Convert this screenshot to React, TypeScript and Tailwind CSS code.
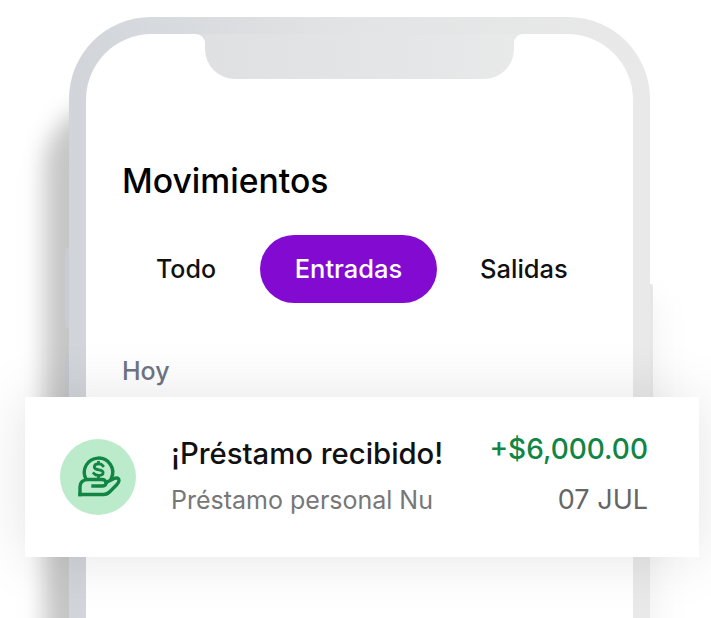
const fontClass = "font-['Inter','Liberation_Sans',sans-serif]";

const LoanIcon = () => (
  <svg viewBox="0 0 95 95" className="h-[95px] w-[95px] shrink-0" fill="none" stroke="#108544" strokeWidth="3.400" strokeLinejoin="round" strokeLinecap="square">
    <path d="M35 49A14.200 14.200 0 1 1 60.500 48" />
    <path d="M52 35.800c-1-1.300-2.500-1.900-4.400-1.900-2.600 0-4.300 1.200-4.300 3 0 4.100 8.800 1.800 8.800 5.500 0 1.900-1.900 3-4.500 3-2 0-3.700-.6-4.800-2" strokeWidth="2.800" />
    <path d="M47.500 32.500V33.500M47.500 46V47" strokeWidth="2.800" />
    <path d="M29 64.500V57c0-4.500 3-7.500 8-7.500H51c2.500 0 4.200 1.500 4.200 3.300S53.500 56 51 56H42" />
    <path d="M55.200 52.500l7.800-4c3-1.200 5-.3 5 2 0 1.700-1 3-2.500 4.500l-6.500 6.500c-1.800 2-3.800 3-6.500 3H29" />
  </svg>
);

export default function App() {
  return (
    <div className={`${fontClass} relative h-[618px] w-[711px] overflow-hidden bg-white`}>
      {/* shadow cast behind the phone */}
      <div className="absolute left-[44px] top-[100px] h-[600px] w-[100px] rounded-tl-[70px] bg-[#c6c6c6] blur-[11px]" />
      <div className="absolute left-[560px] top-[300px] h-[400px] w-[100px] bg-[#f4f4f4] blur-[14px]" />

      {/* side buttons */}
      <div className="absolute left-[65px] top-[248px] h-[80px] w-[5px] rounded-l-[2px] bg-[#c9cdd3]" />
      <div className="absolute left-[65px] top-[353px] h-[80px] w-[5px] rounded-l-[2px] bg-[#c2c6cc]" />
      <div className="absolute left-[648px] top-[284px] h-[130px] w-[5px] rounded-r-[2px] bg-[#e6e6e6]" />

      {/* phone */}
      <div className="relative ml-[69px] mt-[17px] h-[720px] w-[581px] rounded-t-[82px] bg-gradient-to-r from-[#d1d5da] via-[#e3e4e5] to-[#e9e9e9] p-[17px]">
        <div className="h-full overflow-hidden rounded-t-[66px] bg-white">
          {/* notch */}
          <div className="flex h-[45px] justify-center">
            <div className="h-[12px] w-[10px] bg-[#dcdee1]">
              <div className="h-full w-full rounded-tr-[9px] bg-white" />
            </div>
            <div className="w-[309px] rounded-b-[30px] bg-gradient-to-r from-[#dee0e2] to-[#e8e9e9]" />
            <div className="h-[12px] w-[10px] bg-[#e8e9e9]">
              <div className="h-full w-full rounded-tl-[9px] bg-white" />
            </div>
          </div>

          <div className="px-9 pt-[82px]">
            <h1 className="text-[33.700px] font-medium leading-[40px] text-black">Movimientos</h1>
            <div className="mt-[34px] flex items-center">
              <span className="ml-[34px] w-[60px] text-[25px] font-medium leading-[68px] text-[#111111]">Todo</span>
              <span className="ml-[44px] flex h-[68px] w-[177px] items-center justify-center rounded-[34px] bg-[#820ad1] text-[25.500px] font-medium text-white">
                Entradas
              </span>
              <span className="ml-[43px] text-[25.500px] font-medium leading-[68px] text-[#111111]">Salidas</span>
            </div>
            <p className="mt-[53px] text-[25px] font-medium leading-[30px] text-[#6f7483]">Hoy</p>
          </div>
        </div>
      </div>

      {/* floating movement card */}
      <div className="absolute left-[25px] top-[397px] flex h-[160px] w-[674px] bg-white pl-[35px] pr-[51px] shadow-[0_0_60px_rgba(0,0,0,0.11)]">
        <div className="mt-[42px] flex h-[76px] w-[76px] shrink-0 items-center justify-center rounded-full bg-[#bbebca]">
          <LoanIcon />
        </div>
        <div className="ml-[35px] mt-[39px]">
          <p className="text-[29.300px] font-medium leading-[36px] text-[#111111]">¡Préstamo recibido!</p>
          <p className="mt-[14px] text-[25px] leading-[28px] text-[#777777]">Préstamo personal Nu</p>
        </div>
        <div className="ml-auto mt-[33px] text-right">
          <p className="text-[28px] font-medium leading-[38px] text-[#108544]">+$6,000.00</p>
          <p className="mt-[15px] text-[27px] leading-[34px] text-[#666666]">07 JUL</p>
        </div>
      </div>
    </div>
  );
}
